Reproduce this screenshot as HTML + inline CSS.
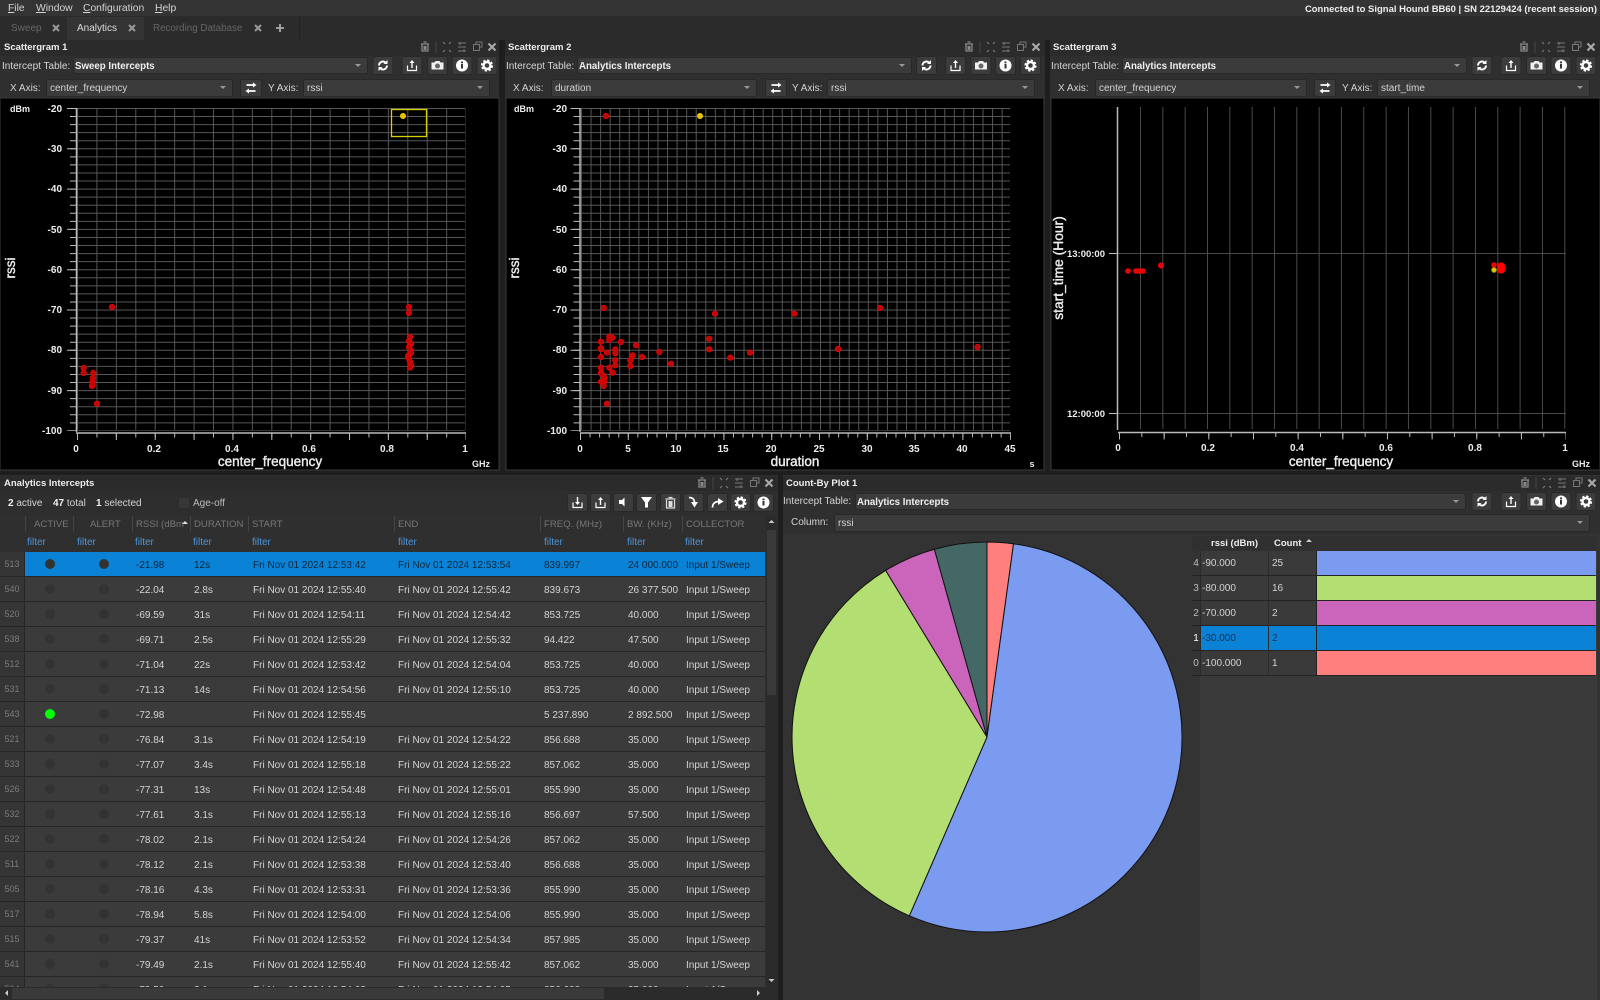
<!DOCTYPE html>
<html><head><meta charset="utf-8"><title>Analytics</title>
<style>
html,body{margin:0;padding:0;background:#1e1e1e;width:1600px;height:1000px;overflow:hidden}
body{font-family:"Liberation Sans",sans-serif;font-size:10px;color:#d4d4d4;position:relative}
.a,.t,.c{position:absolute}
svg.l{position:absolute;left:0;top:0}
.t{white-space:nowrap;line-height:14px;margin-top:1px}
.b{font-weight:bold;color:#eee}
.c{background:#3b3b3b;border:1px solid #282828;border-radius:2px;box-sizing:border-box;line-height:17px;padding-left:3px;color:#d4d4d4;white-space:nowrap}
.c:after{content:"";position:absolute;right:6px;top:6px;border:3px solid transparent;border-top:3.5px solid #999}
.c.b{font-size:9.700px;color:#f0f0f0;padding-left:1px}
.r{position:absolute;left:0;width:765px;height:24px;background:#3b3b3b;border-bottom:1px solid #262626;color:#d4d4d4;line-height:27px}
.r span{position:absolute;top:0;white-space:nowrap}
.r span:nth-child(1){left:0;width:24px;height:24px;background:#353535;border-right:1px solid #262626;text-align:center;color:#7c7c7c;font-size:9px;line-height:25px}
.r span:nth-child(2),.r span:nth-child(3){width:10px;height:10px;border-radius:5px;background:#333;top:7px}
.r span:nth-child(2){left:45px}
.r span:nth-child(3){left:99px}
.r span:nth-child(4){left:136px}
.r span:nth-child(5){left:194px}
.r span:nth-child(6){left:253px}
.r span:nth-child(7){left:398px}
.r span:nth-child(8){left:544px}
.r span:nth-child(9){left:628px}
.r span:nth-child(10){left:686px}
.sel{background:#0a82d6;color:#11263a}
.sel span:nth-child(2),.sel span:nth-child(3){background:#333}
.hd{position:absolute;top:516px;height:16px;line-height:18px;color:#777;font-size:9.600px;padding-left:3px;box-sizing:border-box;border-left:1px solid #444;white-space:nowrap;overflow:hidden}
.fl{position:absolute;top:533px;line-height:19px;color:#4d95d8;font-size:10px}
.p{position:absolute;left:1192px;width:403px;height:24px;border-bottom:1px solid #232323;background:#3a3a3a;line-height:26px;color:#d4d4d4}
.p span{position:absolute;top:0;height:24px;white-space:nowrap}
.p span:nth-child(1){left:0;width:8px;text-align:center;background:#333;color:#bbb;border-right:1px solid #2a2a2a}
.p span:nth-child(2){left:10px}
.p span:nth-child(3){left:80px}
.p span:nth-child(4){left:124px;width:279px;border-left:1px solid #222}
.p i{position:absolute;top:0;height:24px;width:1px;left:76px;background:#2c2c2c}
text{font-family:"Liberation Sans",sans-serif}
</style></head><body>

<svg class="l" width="1600" height="1000">
<rect width="1600" height="16" fill="#343434"/>
<rect y="16" width="1600" height="24" fill="#2b2b2b"/>
<rect x="67" y="17" width="77" height="23" fill="#343434"/>
<rect y="40" width="499" height="16" fill="#2b2b2b"/><rect y="56" width="499" height="42" fill="#2f2f2f"/>
<rect x="505" y="40" width="540" height="16" fill="#2b2b2b"/><rect x="505" y="56" width="540" height="42" fill="#2f2f2f"/>
<rect x="1050" y="40" width="550" height="16" fill="#2b2b2b"/><rect x="1050" y="56" width="550" height="42" fill="#2f2f2f"/>
<rect y="98" width="499" height="372" fill="#000" stroke="#3a3a3a" stroke-width="1"/>
<rect x="506" y="98" width="538" height="372" fill="#000" stroke="#3a3a3a"/>
<rect x="1051" y="98" width="549" height="372" fill="#000" stroke="#3a3a3a"/>
<rect y="475" width="778" height="525" fill="#2e2e2e"/>
<rect x="783" y="475" width="817" height="525" fill="#333"/>
<rect x="0" y="476" width="778" height="15" fill="#2b2b2b"/>
<rect x="783" y="476" width="817" height="15" fill="#2b2b2b"/>
<rect x="783" y="491" width="817" height="43" fill="#2f2f2f"/>

<!-- plot 1 -->
<g fill="none" stroke="#565656">
<line x1="77" x2="466" y1="269" y2="269" stroke-width="322" stroke-dasharray="1 18.43"/>
<line x1="271" x2="271" y1="108" y2="431" stroke-width="388" stroke-dasharray="1 7.06"/>
</g>
<g fill="none" stroke="#bbb">
<path d="M76.500 108V432M76 433H466" stroke-width="1.500"/>
<line x1="77" x2="466" y1="436.500" y2="436.500" stroke-width="7" stroke-dasharray="1 37.86"/>
<line x1="77" x2="466" y1="435.500" y2="435.500" stroke-width="4" stroke-dasharray="1 18.43"/>
<line x1="71.500" x2="71.500" y1="108" y2="431" stroke-width="9" stroke-dasharray="1 39.3"/>
<line x1="73" x2="73" y1="108" y2="431" stroke-width="6" stroke-dasharray="1 7.06"/>
</g>
<g fill="#eee" font-size="10" font-weight="bold" text-anchor="end">
<text x="62" y="112">-20</text><text x="62" y="152">-30</text><text x="62" y="192">-40</text><text x="62" y="233">-50</text><text x="62" y="273">-60</text><text x="62" y="313">-70</text><text x="62" y="353">-80</text><text x="62" y="394">-90</text><text x="62" y="434">-100</text>
</g>
<g fill="#eee" font-size="10" font-weight="bold" text-anchor="middle">
<text x="76" y="452">0</text><text x="154" y="452">0.2</text><text x="232" y="452">0.4</text><text x="309" y="452">0.6</text><text x="387" y="452">0.8</text><text x="465" y="452">1</text>
<text x="20" y="112" font-size="9">dBm</text><text x="481" y="467" font-size="9">GHz</text>
<text x="270" y="466" font-size="13.500" font-weight="normal" stroke="#eee" stroke-width=".4">center_frequency</text>
<text transform="translate(15 268) rotate(-90)" font-size="13.500" font-weight="normal" stroke="#eee" stroke-width=".4">rssi</text>
</g>
<g fill="#b80808" stroke="#e80000" stroke-width="1">
<circle cx="83.700" cy="368" r="2.600"/><circle cx="83.700" cy="373" r="2.600"/><circle cx="93.300" cy="373" r="2.600"/><circle cx="93" cy="378" r="2.600"/><circle cx="92.700" cy="382" r="2.600"/><circle cx="92" cy="386" r="2.600"/><circle cx="92.500" cy="384" r="2.600"/><circle cx="97" cy="403.700" r="2.600"/><circle cx="112" cy="307" r="2.600"/>
<circle cx="409" cy="307" r="2.600"/><circle cx="409" cy="313" r="2.600"/><circle cx="410" cy="337" r="2.600"/><circle cx="409" cy="341" r="2.600"/><circle cx="411" cy="344" r="2.600"/><circle cx="409" cy="347" r="2.600"/><circle cx="410" cy="350" r="2.600"/><circle cx="411" cy="353" r="2.600"/><circle cx="408" cy="356" r="2.600"/><circle cx="409" cy="359" r="2.600"/><circle cx="410" cy="362" r="2.600"/><circle cx="411" cy="365" r="2.600"/><circle cx="410" cy="367.500" r="2.600"/>
</g>
<rect x="391.500" y="109.500" width="35" height="27" fill="none" stroke="#d8d000" stroke-width="1.300"/>
<circle cx="403" cy="116" r="2.500" fill="#e8c000" stroke="#f0d000"/>

<!-- plot 2 -->
<g fill="none" stroke="#565656">
<line x1="581" x2="1011" y1="269" y2="269" stroke-width="322" stroke-dasharray="1 8.56"/>
<line x1="795" x2="795" y1="108" y2="431" stroke-width="430" stroke-dasharray="1 7.06"/>
</g>
<g fill="none" stroke="#bbb">
<path d="M580 108V432M580 433H1011" stroke-width="1.500"/>
<line x1="580" x2="1011" y1="436.500" y2="436.500" stroke-width="7" stroke-dasharray="1 46.8"/>
<line x1="580" x2="1011" y1="435.500" y2="435.500" stroke-width="4" stroke-dasharray="1 8.56"/>
<line x1="575" x2="575" y1="108" y2="431" stroke-width="9" stroke-dasharray="1 39.3"/>
<line x1="576.500" x2="576.500" y1="108" y2="431" stroke-width="6" stroke-dasharray="1 7.06"/>
</g>
<g fill="#eee" font-size="10" font-weight="bold" text-anchor="end">
<text x="567" y="112">-20</text><text x="567" y="152">-30</text><text x="567" y="192">-40</text><text x="567" y="233">-50</text><text x="567" y="273">-60</text><text x="567" y="313">-70</text><text x="567" y="353">-80</text><text x="567" y="394">-90</text><text x="567" y="434">-100</text>
</g>
<g fill="#eee" font-size="10" font-weight="bold" text-anchor="middle">
<text x="580" y="452">0</text><text x="628" y="452">5</text><text x="676" y="452">10</text><text x="723" y="452">15</text><text x="771" y="452">20</text><text x="819" y="452">25</text><text x="867" y="452">30</text><text x="914" y="452">35</text><text x="962" y="452">40</text><text x="1010" y="452">45</text>
<text x="524" y="112" font-size="9">dBm</text><text x="1032" y="467" font-size="9">s</text>
<text x="795" y="466" font-size="13.500" font-weight="normal" stroke="#eee" stroke-width=".4">duration</text>
<text transform="translate(519 268) rotate(-90)" font-size="13.500" font-weight="normal" stroke="#eee" stroke-width=".4">rssi</text>
</g>
<g fill="#b80808" stroke="#e80000" stroke-width="1">
<circle cx="606" cy="116" r="2.600"/><circle cx="977.500" cy="347" r="2.600"/><circle cx="838" cy="349" r="2.600"/><circle cx="880" cy="308" r="2.600"/>
<circle cx="603.700" cy="308" r="2.600"/><circle cx="715" cy="313.700" r="2.600"/><circle cx="794.300" cy="313.700" r="2.600"/><circle cx="601" cy="341.700" r="2.600"/><circle cx="609.300" cy="336.700" r="2.600"/><circle cx="612.300" cy="337.700" r="2.600"/><circle cx="609.300" cy="340" r="2.600"/><circle cx="621" cy="342" r="2.600"/><circle cx="636" cy="345.300" r="2.600"/><circle cx="601" cy="348.300" r="2.600"/><circle cx="601" cy="349.300" r="2.600"/><circle cx="615.300" cy="349.300" r="2.600"/><circle cx="607" cy="352.700" r="2.600"/><circle cx="615.300" cy="353.300" r="2.600"/><circle cx="632.700" cy="355.300" r="2.600"/><circle cx="659.300" cy="352" r="2.600"/><circle cx="709.300" cy="338.700" r="2.600"/><circle cx="709.300" cy="349.300" r="2.600"/><circle cx="730.300" cy="357.700" r="2.600"/><circle cx="750" cy="352.700" r="2.600"/><circle cx="642" cy="357" r="2.600"/><circle cx="601" cy="357" r="2.600"/><circle cx="615.300" cy="360.300" r="2.600"/><circle cx="630.300" cy="360.300" r="2.600"/><circle cx="671" cy="363.700" r="2.600"/><circle cx="615.300" cy="365.300" r="2.600"/><circle cx="630.300" cy="366" r="2.600"/><circle cx="601" cy="367.700" r="2.600"/><circle cx="609.300" cy="367.700" r="2.600"/><circle cx="612.700" cy="372.700" r="2.600"/><circle cx="601" cy="372.700" r="2.600"/><circle cx="601.700" cy="374" r="2.600"/><circle cx="604.300" cy="377.300" r="2.600"/><circle cx="601" cy="381.700" r="2.600"/><circle cx="604.300" cy="381" r="2.600"/><circle cx="603.300" cy="384" r="2.600"/><circle cx="603.700" cy="386" r="2.600"/><circle cx="607" cy="403.700" r="2.600"/>
</g>
<circle cx="700" cy="116" r="2.500" fill="#e8c000" stroke="#f0d000"/>

<!-- plot 3 -->
<line x1="1140" x2="1566" y1="268" y2="268" stroke-width="322" stroke="#4a4a4a" stroke-dasharray="1 21.33"/>
<path d="M1118 253.500H1566M1118 413.500H1566" stroke="#4a4a4a"/>
<g fill="none" stroke="#bbb">
<path d="M1117.500 107V430M1118 432.500H1566" stroke-width="1.500"/>
<line x1="1119" x2="1566" y1="436.500" y2="436.500" stroke-width="6" stroke-dasharray="1 43.66"/>
<line x1="1119" x2="1566" y1="435" y2="435" stroke-width="4" stroke-dasharray="1 21.33"/>
<path d="M1109 253.500H1117M1109 413.500H1117" stroke-width="1"/>
</g>
<g fill="#eee" font-size="10" font-weight="bold">
<text x="1105" y="257" text-anchor="end" font-size="9.500">13:00:00</text><text x="1105" y="417" text-anchor="end" font-size="9.500">12:00:00</text>
<g text-anchor="middle"><text x="1118" y="451">0</text><text x="1208" y="451">0.2</text><text x="1297" y="451">0.4</text><text x="1386" y="451">0.6</text><text x="1475" y="451">0.8</text><text x="1565" y="451">1</text><text x="1581" y="467" font-size="9">GHz</text>
<text x="1341" y="466" font-size="13.500" font-weight="normal" stroke="#eee" stroke-width=".4">center_frequency</text>
<text transform="translate(1063 268) rotate(-90)" font-size="13.800" font-weight="normal" stroke="#eee" stroke-width=".4">start_time (Hour)</text></g>
</g>
<g fill="#d80808" stroke="#f00" stroke-width="1">
<circle cx="1128" cy="271" r="2.300"/><circle cx="1136" cy="271" r="2.300"/><circle cx="1139" cy="271" r="2.300"/><circle cx="1143" cy="271" r="2.300"/><circle cx="1161" cy="265.500" r="2.500"/><circle cx="1494" cy="265" r="2.300"/>
<rect x="1497.500" y="263" width="7" height="10" rx="3" fill="#f00"/>
</g>
<circle cx="1494" cy="270" r="2.300" fill="#e0d000" stroke="#b0a000"/>

<!-- pie -->
<g stroke="#111" stroke-width="1">
<path d="M987 737L987 542A195 195 0 0 1 1013.550 543.820Z" fill="#ff7f7f"/>
<path d="M987 737L1013.550 543.820A195 195 0 1 1 909.310 915.850Z" fill="#7a9bef"/>
<path d="M987 737L909.310 915.850A195 195 0 0 1 885.680 570.400Z" fill="#b3df72"/>
<path d="M987 737L885.680 570.400A195 195 0 0 1 934.390 549.240Z" fill="#cb65bc"/>
<path d="M987 737L934.390 549.240A195 195 0 0 1 987 542Z" fill="#446866"/>
</g>
<rect x="1192" y="536" width="405" height="464" fill="#3a3a3a"/>
<rect x="1192" y="536" width="8" height="464" fill="#333"/>
<rect x="1192" y="536" width="405" height="15" fill="#303030"/>
<rect x="0" y="516" width="766" height="36" fill="#2f2f2f"/>
</svg>

<!-- menu -->
<div class="t" style="left:8px;top:1px;font-size:10.300px"><u>F</u>ile</div>
<div class="t" style="left:36px;top:1px;font-size:10.300px"><u>W</u>indow</div>
<div class="t" style="left:83px;top:1px;font-size:10.300px"><u>C</u>onfiguration</div>
<div class="t" style="left:155px;top:1px;font-size:10.300px"><u>H</u>elp</div>
<div class="t b" style="right:3px;top:2px;font-size:9.470px">Connected to Signal Hound BB60 | SN 22129424 (recent session)</div>
<div class="t" style="left:11px;top:21px;color:#666;font-size:10px">Sweep</div>
<div class="t" style="left:77px;top:21px;color:#ddd;font-size:10px">Analytics</div>
<div class="t" style="left:153px;top:21px;color:#666;font-size:9.800px">Recording Database</div>

<!-- panel 1 -->
<div class="t b" style="left:4px;top:40px;font-size:9.500px">Scattergram 1</div>
<div class="t" style="left:2px;top:59px">Intercept Table:</div>
<div class="c b" style="left:73px;top:57px;width:295px;height:17px">Sweep Intercepts</div>
<div class="t" style="left:10px;top:81px">X Axis:</div>
<div class="c" style="left:46px;top:79px;width:187px;height:18px">center_frequency</div>
<div class="t" style="left:268px;top:81px">Y Axis:</div>
<div class="c" style="left:303px;top:79px;width:187px;height:18px">rssi</div>

<!-- panel 2 -->
<div class="t b" style="left:508px;top:40px;font-size:9.500px">Scattergram 2</div>
<div class="t" style="left:506px;top:59px">Intercept Table:</div>
<div class="c b" style="left:577px;top:57px;width:335px;height:17px">Analytics Intercepts</div>
<div class="t" style="left:513px;top:81px">X Axis:</div>
<div class="c" style="left:551px;top:79px;width:206px;height:18px">duration</div>
<div class="t" style="left:792px;top:81px">Y Axis:</div>
<div class="c" style="left:827px;top:79px;width:208px;height:18px">rssi</div>

<!-- panel 3 -->
<div class="t b" style="left:1053px;top:40px;font-size:9.500px">Scattergram 3</div>
<div class="t" style="left:1051px;top:59px">Intercept Table:</div>
<div class="c b" style="left:1122px;top:57px;width:345px;height:17px">Analytics Intercepts</div>
<div class="t" style="left:1058px;top:81px">X Axis:</div>
<div class="c" style="left:1095px;top:79px;width:212px;height:18px">center_frequency</div>
<div class="t" style="left:1342px;top:81px">Y Axis:</div>
<div class="c" style="left:1377px;top:79px;width:213px;height:18px">start_time</div>

<!-- table panel -->
<div class="t b" style="left:4px;top:476px;font-size:9.500px">Analytics Intercepts</div>
<div class="t" style="left:8px;top:496px"><b style="color:#eee">2</b> active</div>
<div class="t" style="left:53px;top:496px"><b style="color:#eee">47</b> total</div>
<div class="t" style="left:96px;top:496px"><b style="color:#eee">1</b> selected</div>
<div class="a" style="left:178px;top:497px;width:10px;height:10px;background:#373737;border:1px solid #2c2c2c"></div>
<div class="t" style="left:193px;top:496px;color:#bbb">Age-off</div>

<div class="hd" style="left:25px;width:48px;padding-left:8px">ACTIVE</div>
<div class="hd" style="left:73px;width:59px;padding-left:16px">ALERT</div>
<div class="hd" style="left:132px;width:58px">RSSI (dBm</div>
<div class="hd" style="left:190px;width:58px">DURATION</div>
<div class="hd" style="left:248px;width:146px">START</div>
<div class="hd" style="left:394px;width:146px">END</div>
<div class="hd" style="left:540px;width:83px">FREQ. (MHz)</div>
<div class="hd" style="left:623px;width:59px">BW. (KHz)</div>
<div class="hd" style="left:682px;width:83px">COLLECTOR</div>
<div class="fl" style="left:27px">filter</div><div class="fl" style="left:77px">filter</div><div class="fl" style="left:135px">filter</div><div class="fl" style="left:193px">filter</div><div class="fl" style="left:252px">filter</div><div class="fl" style="left:398px">filter</div><div class="fl" style="left:544px">filter</div><div class="fl" style="left:627px">filter</div><div class="fl" style="left:685px">filter</div>

<div class="a" style="left:0;top:552px;width:766px;height:435px;overflow:hidden">
<div class="r sel" style="top:0"><span>513</span><span></span><span></span><span>-21.98</span><span>12s</span><span>Fri Nov 01 2024 12:53:42</span><span>Fri Nov 01 2024 12:53:54</span><span>839.997</span><span>24 000.000</span><span>Input 1/Sweep</span></div>
<div class="r" style="top:25px"><span>540</span><span></span><span></span><span>-22.04</span><span>2.8s</span><span>Fri Nov 01 2024 12:55:40</span><span>Fri Nov 01 2024 12:55:42</span><span>839.673</span><span>26 377.500</span><span>Input 1/Sweep</span></div>
<div class="r" style="top:50px"><span>520</span><span></span><span></span><span>-69.59</span><span>31s</span><span>Fri Nov 01 2024 12:54:11</span><span>Fri Nov 01 2024 12:54:42</span><span>853.725</span><span>40.000</span><span>Input 1/Sweep</span></div>
<div class="r" style="top:75px"><span>538</span><span></span><span></span><span>-69.71</span><span>2.5s</span><span>Fri Nov 01 2024 12:55:29</span><span>Fri Nov 01 2024 12:55:32</span><span>94.422</span><span>47.500</span><span>Input 1/Sweep</span></div>
<div class="r" style="top:100px"><span>512</span><span></span><span></span><span>-71.04</span><span>22s</span><span>Fri Nov 01 2024 12:53:42</span><span>Fri Nov 01 2024 12:54:04</span><span>853.725</span><span>40.000</span><span>Input 1/Sweep</span></div>
<div class="r" style="top:125px"><span>531</span><span></span><span></span><span>-71.13</span><span>14s</span><span>Fri Nov 01 2024 12:54:56</span><span>Fri Nov 01 2024 12:55:10</span><span>853.725</span><span>40.000</span><span>Input 1/Sweep</span></div>
<div class="r" style="top:150px"><span>543</span><span style="background:#0f0"></span><span></span><span>-72.98</span><span></span><span>Fri Nov 01 2024 12:55:45</span><span></span><span>5 237.890</span><span>2 892.500</span><span>Input 1/Sweep</span></div>
<div class="r" style="top:175px"><span>521</span><span></span><span></span><span>-76.84</span><span>3.1s</span><span>Fri Nov 01 2024 12:54:19</span><span>Fri Nov 01 2024 12:54:22</span><span>856.688</span><span>35.000</span><span>Input 1/Sweep</span></div>
<div class="r" style="top:200px"><span>533</span><span></span><span></span><span>-77.07</span><span>3.4s</span><span>Fri Nov 01 2024 12:55:18</span><span>Fri Nov 01 2024 12:55:22</span><span>857.062</span><span>35.000</span><span>Input 1/Sweep</span></div>
<div class="r" style="top:225px"><span>526</span><span></span><span></span><span>-77.31</span><span>13s</span><span>Fri Nov 01 2024 12:54:48</span><span>Fri Nov 01 2024 12:55:01</span><span>855.990</span><span>35.000</span><span>Input 1/Sweep</span></div>
<div class="r" style="top:250px"><span>532</span><span></span><span></span><span>-77.61</span><span>3.1s</span><span>Fri Nov 01 2024 12:55:13</span><span>Fri Nov 01 2024 12:55:16</span><span>856.697</span><span>57.500</span><span>Input 1/Sweep</span></div>
<div class="r" style="top:275px"><span>522</span><span></span><span></span><span>-78.02</span><span>2.1s</span><span>Fri Nov 01 2024 12:54:24</span><span>Fri Nov 01 2024 12:54:26</span><span>857.062</span><span>35.000</span><span>Input 1/Sweep</span></div>
<div class="r" style="top:300px"><span>511</span><span></span><span></span><span>-78.12</span><span>2.1s</span><span>Fri Nov 01 2024 12:53:38</span><span>Fri Nov 01 2024 12:53:40</span><span>856.688</span><span>35.000</span><span>Input 1/Sweep</span></div>
<div class="r" style="top:325px"><span>505</span><span></span><span></span><span>-78.16</span><span>4.3s</span><span>Fri Nov 01 2024 12:53:31</span><span>Fri Nov 01 2024 12:53:36</span><span>855.990</span><span>35.000</span><span>Input 1/Sweep</span></div>
<div class="r" style="top:350px"><span>517</span><span></span><span></span><span>-78.94</span><span>5.8s</span><span>Fri Nov 01 2024 12:54:00</span><span>Fri Nov 01 2024 12:54:06</span><span>855.990</span><span>35.000</span><span>Input 1/Sweep</span></div>
<div class="r" style="top:375px"><span>515</span><span></span><span></span><span>-79.37</span><span>41s</span><span>Fri Nov 01 2024 12:53:52</span><span>Fri Nov 01 2024 12:54:34</span><span>857.985</span><span>35.000</span><span>Input 1/Sweep</span></div>
<div class="r" style="top:400px"><span>541</span><span></span><span></span><span>-79.49</span><span>2.1s</span><span>Fri Nov 01 2024 12:55:40</span><span>Fri Nov 01 2024 12:55:42</span><span>857.062</span><span>35.000</span><span>Input 1/Sweep</span></div>
<div class="r" style="top:425px"><span>504</span><span></span><span></span><span>-79.50</span><span>2.1s</span><span>Fri Nov 01 2024 12:54:02</span><span>Fri Nov 01 2024 12:54:05</span><span>856.688</span><span>35.000</span><span>Input 1/Sweep</span></div>
</div>

<!-- count-by panel -->
<div class="t b" style="left:786px;top:476px;font-size:9.500px">Count-By Plot 1</div>
<div class="t" style="left:783px;top:494px">Intercept Table:</div>
<div class="c b" style="left:855px;top:493px;width:611px;height:17px">Analytics Intercepts</div>
<div class="t" style="left:791px;top:515px">Column:</div>
<div class="c" style="left:834px;top:514px;width:756px;height:18px">rssi</div>
<div class="t" style="left:1211px;top:536px;color:#eee;font-weight:bold;font-size:9.500px">rssi (dBm)</div>
<div class="t" style="left:1274px;top:536px;color:#eee;font-weight:bold;font-size:9.500px">Count</div>
<div class="p" style="top:551px"><span>4</span><span>-90.000</span><span>25</span><span style="background:#7a9bef"></span><i></i></div>
<div class="p" style="top:576px"><span>3</span><span>-80.000</span><span>16</span><span style="background:#b3df72"></span><i></i></div>
<div class="p" style="top:601px"><span>2</span><span>-70.000</span><span>2</span><span style="background:#cb65bc"></span><i></i></div>
<div class="p" style="top:626px;background:#0a82d6;color:#12324e"><span style="color:#fff">1</span><span>-30.000</span><span>2</span><span style="background:#0a82d6"></span><i></i></div>
<div class="p" style="top:651px"><span>0</span><span>-100.000</span><span>1</span><span style="background:#ff7f7f"></span><i></i></div>

<!-- icons overlay -->
<svg class="l" width="1600" height="1000">
<defs>
<g id="bg"><rect x=".5" y=".5" width="20" height="18" rx="2" fill="#3c3c3c" stroke="#282828"/></g>
<g id="refresh"><use href="#bg"/><path d="M6.500 9.500a4 4 0 0 1 6.700-2.900M14.500 9.500a4 4 0 0 1-6.700 2.900" fill="none" stroke="#fff" stroke-width="1.900"/><path d="M15 4v4h-4zM6 15v-4h4z" fill="#fff"/></g>
<g id="share"><use href="#bg"/><path d="M6 9.500v5h9v-5" fill="none" stroke="#fff" stroke-width="1.200"/><path d="M10.500 12V6" stroke="#fff" stroke-width="1.400"/><path d="M8 7l2.500-3 2.500 3z" fill="#fff"/></g>
<g id="dl"><use href="#bg"/><path d="M6 9.500v5h9v-5" fill="none" stroke="#fff" stroke-width="1.200"/><path d="M10.500 4v6" stroke="#fff" stroke-width="1.400"/><path d="M8 9l2.500 3 2.500-3z" fill="#fff"/></g>
<g id="cam"><use href="#bg"/><path d="M4.500 6.500h3l1-1.500h4l1 1.500h3v7h-12z" fill="#f0f0f0"/><circle cx="10.500" cy="10" r="2.500" fill="#666"/></g>
<g id="info"><use href="#bg"/><circle cx="10.500" cy="9.500" r="6" fill="#fff"/><rect x="9.500" y="5.500" width="2" height="1.800" fill="#333"/><rect x="9.500" y="8" width="2" height="4.500" fill="#333"/></g>
<g id="gear"><use href="#bg"/><circle cx="10.500" cy="9.500" r="3.500" fill="none" stroke="#fff" stroke-width="2.400"/><circle cx="10.500" cy="9.500" r="5.300" fill="none" stroke="#fff" stroke-width="1.600" stroke-dasharray="2.400 1.760"/></g>
<g id="btns"><use href="#refresh"/><use href="#share" x="29"/><use href="#cam" x="54.500"/><use href="#info" x="79"/><use href="#gear" x="104"/></g>
<g id="tt" fill="none" stroke="#888">
<path d="M-4-3h8M-3-3v7h6v-7M-1.500-5h3" stroke-width="1.300"/><rect x="-1.500" y="-1" width="3" height="4" fill="#888" stroke="none"/>
<path d="M11 -6V6" stroke="#444"/>
<path d="M18-5l2 2M26-5l-2 2M18 5l2-2M26 5l-2-2" stroke-width="1.200" stroke="#777"/>
<path d="M33-4h8M33 4h8M33 0h8M35-5v3M39 5V2" stroke-width="1" stroke="#777"/>
<path d="M48.500-2.500h6v6h-6zM51-2.500v-2.500h6v5h-2.500" stroke-width="1" stroke="#777"/>
<path d="M63.500-3.500l7 7M70.500-3.500l-7 7" stroke="#aaa" stroke-width="2.100"/>
</g>
<path id="xx" d="M-3-3L3 3M3-3L-3 3" stroke="#999" stroke-width="2"/>
</defs>
<use href="#xx" x="56" y="28"/><use href="#xx" x="132" y="28"/><use href="#xx" x="258" y="28"/>
<path d="M280 24v8M276 28h8" stroke="#aaa" stroke-width="1.800"/>
<path d="M299.500 17v22" stroke="#222"/>
<use href="#tt" x="425" y="47"/><use href="#tt" x="969" y="47"/><use href="#tt" x="1524" y="47"/><use href="#tt" x="702" y="483"/><use href="#tt" x="1525" y="483"/>
<use href="#btns" x="372.500" y="56"/><use href="#btns" x="916" y="56"/><use href="#btns" x="1471.500" y="56"/><use href="#btns" x="1471.500" y="492"/>
<g id="sw"><rect x="240.500" y="79.500" width="21" height="17" rx="2" fill="#3c3c3c" stroke="#282828"/><path d="M246.500 85h7M255.500 91h-7" stroke="#fff" stroke-width="1.700"/><path d="M253 82.500l3.500 2.500-3.500 2.500zM249 88.500l-3.500 2.500 3.500 2.500z" fill="#fff"/></g>
<use href="#sw" x="525"/><use href="#sw" x="1074"/>
<g>
<use href="#dl" x="567" y="493"/>
<use href="#share" x="590" y="493"/>
<use href="#bg" x="613" y="493"/><path d="M619 500h3l2.500-2.500v9l-2.500-2.500h-3z" fill="#fff"/>
<use href="#bg" x="636" y="493"/><path d="M641 497h11l-4 5.500v5h-3v-5z" fill="#fff"/>
<use href="#bg" x="660" y="493"/><path d="M665.500 499h10M666.500 500v8h8v-8M668.500 497.500h4" stroke="#ddd" stroke-width="1.200" fill="none"/><rect x="668.500" y="501" width="4" height="6" fill="#ddd"/>
<use href="#bg" x="683" y="493"/><path d="M689 497.500c3.500 0 5.500 2 5.500 5" stroke="#fff" stroke-width="1.700" fill="none"/><path d="M691 502h7l-3.500 5.500z" fill="#fff"/>
<use href="#bg" x="707" y="493"/><path d="M712.500 507.500c0-4 2.500-6 6.500-6" stroke="#fff" stroke-width="1.700" fill="none"/><path d="M718 498l5.500 3.500-5.500 3.500z" fill="#fff"/>
<use href="#gear" x="730" y="493"/><use href="#info" x="753" y="493"/>
</g>
<path d="M182 524l3-3 3 3z" fill="#ddd"/>
<path d="M1306 542l3-3 3 3z" fill="#ccc"/>
<rect x="766" y="516" width="11" height="484" fill="#2b2b2b"/>
<rect x="767" y="530" width="9" height="165" fill="#3a3a3a"/>
<path d="M768.500 523l3-3 3 3zM768.500 979l3 3 3-3z" fill="#ccc"/>
<rect x="0" y="987" width="766" height="13" fill="#2b2b2b"/>
<rect x="12" y="988" width="592" height="11" fill="#3a3a3a"/>
<path d="M8 990v6l-3-3zM757 990v6l3-3z" fill="#ccc"/>
</svg>
</body></html>
